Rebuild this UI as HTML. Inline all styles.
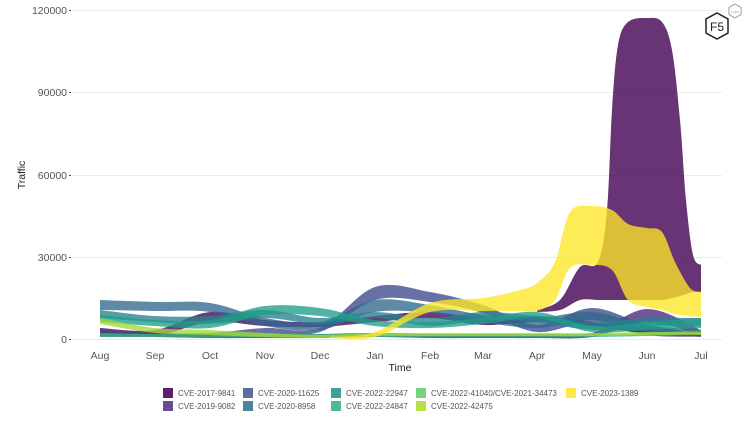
<!DOCTYPE html>
<html><head><meta charset="utf-8"><style>
html,body{margin:0;padding:0;background:#fff;width:750px;height:436px;overflow:hidden}
svg{display:block}
text{font-family:"Liberation Sans",sans-serif}
</style></head><body>
<svg id="s" width="750" height="436" viewBox="0 0 750 436" xmlns="http://www.w3.org/2000/svg">
<g stroke="#ebebeb" stroke-width="1">
<line x1="72" y1="10.5" x2="722" y2="10.5"/>
<line x1="72" y1="92.5" x2="722" y2="92.5"/>
<line x1="72" y1="175.5" x2="722" y2="175.5"/>
<line x1="72" y1="257.5" x2="722" y2="257.5"/>
<line x1="72" y1="339.5" x2="722" y2="339.5"/>
</g>
<g stroke="#444" stroke-width="1">
<line x1="69" y1="10.5" x2="71" y2="10.5"/><line x1="69" y1="92.5" x2="71" y2="92.5"/>
<line x1="69" y1="175.5" x2="71" y2="175.5"/><line x1="69" y1="257.5" x2="71" y2="257.5"/>
<line x1="69" y1="339.5" x2="71" y2="339.5"/>
</g>
<g font-size="10.5" fill="#555" text-anchor="end">
<text x="67" y="14">120000</text><text x="67" y="96">90000</text><text x="67" y="179">60000</text>
<text x="67" y="261">30000</text><text x="67" y="343">0</text>
</g>
<text transform="translate(25,175) rotate(-90)" font-size="10.5" fill="#222" text-anchor="middle">Traffic</text>
<g id="bands"></g>
<g font-size="10.5" fill="#555" text-anchor="middle">
<text x="100" y="359">Aug</text><text x="155" y="359">Sep</text><text x="210" y="359">Oct</text>
<text x="265" y="359">Nov</text><text x="320" y="359">Dec</text><text x="375" y="359">Jan</text>
<text x="430" y="359">Feb</text><text x="483" y="359">Mar</text><text x="537" y="359">Apr</text>
<text x="592" y="359">May</text><text x="647" y="359">Jun</text><text x="701" y="359">Jul</text>
</g>
<text x="400" y="371" font-size="10.5" fill="#222" text-anchor="middle">Time</text>
<g font-size="8" fill="#555">
<rect x="163" y="388" width="10" height="10" fill="#5b1f6b"/><text x="178" y="396">CVE-2017-9841</text>
<rect x="163" y="401" width="10" height="10" fill="#6a4c93"/><text x="178" y="409">CVE-2019-9082</text>
<rect x="243" y="388" width="10" height="10" fill="#5a6ea0"/><text x="258" y="396">CVE-2020-11625</text>
<rect x="243" y="401" width="10" height="10" fill="#4a859d"/><text x="258" y="409">CVE-2020-8958</text>
<rect x="331" y="388" width="10" height="10" fill="#3f9d9a"/><text x="346" y="396">CVE-2022-22947</text>
<rect x="331" y="401" width="10" height="10" fill="#4dbb95"/><text x="346" y="409">CVE-2022-24847</text>
<rect x="416" y="388" width="10" height="10" fill="#7bd17c"/><text x="431" y="396">CVE-2022-41040/CVE-2021-34473</text>
<rect x="416" y="401" width="10" height="10" fill="#b7e04a"/><text x="431" y="409">CVE-2022-42475</text>
<rect x="566" y="388" width="10" height="10" fill="#fde84a"/><text x="581" y="396">CVE-2023-1389</text>
</g>
<g fill="none" stroke="#222">
<polygon points="717,13 728,19 728,33 717,39 706,33 706,19" stroke-width="1.5"/>
<polygon points="735,4 741,7.5 741,14.5 735,18 729,14.5 729,7.5" stroke="#999" stroke-width="1" fill="#fff"/>
</g>
<text x="717" y="31" font-size="12" fill="#222" text-anchor="middle">F5</text>
<text x="735" y="13" font-size="3" fill="#999" text-anchor="middle">LABS</text>
</svg>
<script>
var M=[100,155,210,265,320,375,430,483,537,592,647,701];
function curve(p){var d="";for(var i=0;i<p.length-1;i++){var p0=p[i-1]||p[i],p1=p[i],p2=p[i+1],p3=p[i+2]||p2;
var c1x=p1[0]+(p2[0]-p0[0])/6,c1y=p1[1]+(p2[1]-p0[1])/6,c2x=p2[0]-(p3[0]-p1[0])/6,c2y=p2[1]-(p3[1]-p1[1])/6;
d+=" C"+c1x+","+c1y+" "+c2x+","+c2y+" "+p2[0]+","+p2[1];}return d;}
function band(xs,top,bot){var t=xs.map(function(x,i){return [x,top[i]]});var b=xs.map(function(x,i){return [x,bot[i]]}).reverse();
return "M"+t[0][0]+","+t[0][1]+curve(t)+" L"+b[0][0]+","+b[0][1]+curve(b)+" Z";}
var B=[
["#440154",[328,330,312,320,322,316,312,318,316,322,330,333],[333,336,322,326,327,322,318,325,322,326,334,336]],
["#482878",[332,333,334,334,334,333,334,334,334,333,309,330],[337,337,338,338,338,337,338,338,338,337,322,335]],
["#3e4989",[330,333,333,328,328,287,292,305,325,308,325,333],[336,337,337,334,332,300,302,313,332,322,335,337]],
["#31688e",[300,302,303,318,322,300,305,315,318,312,325,330],[310,311,312,326,330,312,313,322,328,320,332,335]],
["#26828e",[310,316,316,310,318,312,318,312,316,322,318,318],[318,322,324,318,324,318,326,320,322,330,326,326]],
["#1f9e89",[315,320,320,306,308,320,322,318,312,326,322,318],[322,326,328,315,316,326,328,324,318,332,330,328]],
["#35b779",[333,334,334,334,334,334,334,334,334,334,333,330],[337,337,337,337,337,337,337,337,337,337,336,334]],
["#a0da39",[318,328,330,333,335,333,333,333,333,333,332,332],[324,333,335,337,338,336,336,336,336,336,335,335]]
];
var g=document.getElementById("bands"),h="";
B.forEach(function(b){h+='<path d="'+band(M,b[1],b[2])+'" fill="'+b[0]+'" fill-opacity="0.78"/>';});
h+='<path d="'+band([537,560,580,598,607,612,618,628,647,662,672,680,686,693,701],[310,300,267,262,210,110,45,22,18,22,50,120,200,255,265],[312,310,300,300,300,300,300,300,300,300,298,296,294,292,292])+'" fill="#440154" fill-opacity="0.8"/>';
h+='<path d="'+band([330,375,430,483,520,537,555,570,592,612,628,647,662,675,690,701],[337,332,303,298,290,283,262,212,206,210,224,228,232,262,288,292],[338,337,312,311,311,311,300,268,265,270,300,307,310,314,316,317])+'" fill="#fde725" fill-opacity="0.78"/>';
g.innerHTML=h;
</script>
</body></html>
